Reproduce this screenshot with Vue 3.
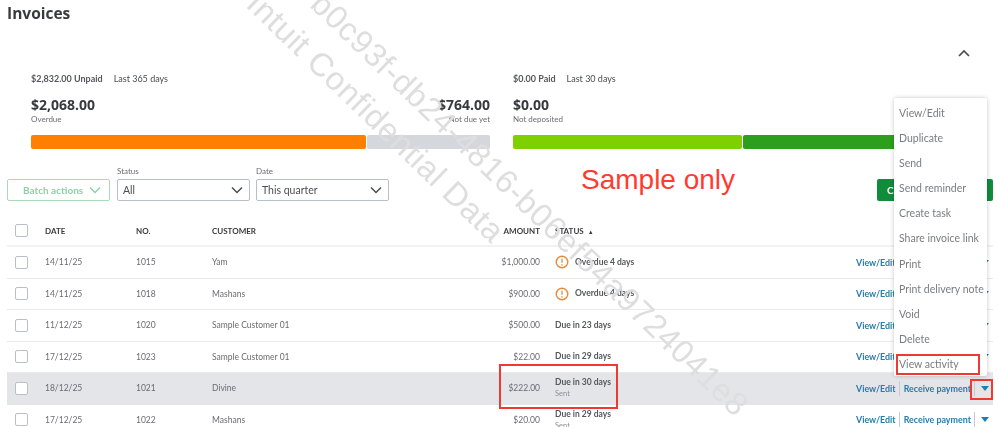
<script setup>
const rows = [
  { date: '14/11/25', no: '1015', customer: 'Yam', amount: '$1,000.00', status: 'Overdue 4 days', overdue: true },
  { date: '14/11/25', no: '1018', customer: 'Mashans', amount: '$900.00', status: 'Overdue 4 days', overdue: true },
  { date: '11/12/25', no: '1020', customer: 'Sample Customer 01', amount: '$500.00', status: 'Due in 23 days' },
  { date: '17/12/25', no: '1023', customer: 'Sample Customer 01', amount: '$22.00', status: 'Due in 29 days' },
  { date: '18/12/25', no: '1021', customer: 'Divine', amount: '$222.00', status: 'Due in 30 days', sub: 'Sent', active: true },
  { date: '17/12/25', no: '1022', customer: 'Mashans', amount: '$20.00', status: 'Due in 29 days', sub: 'Sent' }
]
const menu = ['View/Edit', 'Duplicate', 'Send', 'Send reminder', 'Create task', 'Share invoice link', 'Print', 'Print delivery note', 'Void', 'Delete', 'View activity']
</script>

<template>
  <div class="root">
    <div class="shot">
      <h1 class="title">Invoices</h1>
      <div class="collapse">
        <svg width="14" height="9" viewBox="0 0 14 9"><path d="M2 7l5-5 5 5" fill="none" stroke="#4a4d52" stroke-width="1.7" /></svg>
      </div>

      <section class="money">
        <div class="panel">
          <p class="cap"><b>$2,832.00 Unpaid</b><span>Last 365 days</span></p>
          <div class="figures">
            <div><strong>$2,068.00</strong><small>Overdue</small></div>
            <div class="end"><strong>$764.00</strong><small>Not due yet</small></div>
          </div>
          <div class="bar">
            <i class="orange"></i>
            <i class="grey"></i>
          </div>
        </div>
        <div class="panel">
          <p class="cap"><b>$0.00 Paid</b><span>Last 30 days</span></p>
          <div class="figures">
            <div><strong>$0.00</strong><small>Not deposited</small></div>
          </div>
          <div class="bar">
            <i class="lime"></i>
            <i class="forest"></i>
          </div>
        </div>
      </section>

      <section class="filters">
        <button class="batch">Batch actions
          <svg width="12" height="8" viewBox="0 0 12 8"><path d="M1 1.5l5 5 5-5" fill="none" stroke="#8fd0a5" stroke-width="1.5" /></svg>
        </button>
        <label class="field">
          <span>Status</span>
          <div class="select">All
            <svg width="12" height="8" viewBox="0 0 12 8"><path d="M1 1.5l5 5 5-5" fill="none" stroke="#4a4d52" stroke-width="1.5" /></svg>
          </div>
        </label>
        <label class="field">
          <span>Date</span>
          <div class="select">This quarter
            <svg width="12" height="8" viewBox="0 0 12 8"><path d="M1 1.5l5 5 5-5" fill="none" stroke="#4a4d52" stroke-width="1.5" /></svg>
          </div>
        </label>
        <button class="create">Create invoice</button>
      </section>

      <section class="table">
        <div class="row head">
          <span class="box"></span>
          <span>DATE</span>
          <span>NO.</span>
          <span>CUSTOMER</span>
          <span class="amt">AMOUNT</span>
          <span class="sort">STATUS <em>▲</em></span>
          <span></span>
        </div>
        <div v-for="r in rows" :key="r.no" class="row" :class="{ active: r.active }">
          <span class="box"></span>
          <span>{{ r.date }}</span>
          <span>{{ r.no }}</span>
          <span>{{ r.customer }}</span>
          <span class="amt">{{ r.amount }}</span>
          <div class="status" :class="{ warn: r.overdue }">
            <svg v-if="r.overdue" width="14" height="14" viewBox="0 0 14 14">
              <circle cx="7" cy="7" r="5.8" fill="none" stroke="#e88a3c" stroke-width="1.4" />
              <path d="M7 3.8v4M7 9.2v1.2" stroke="#e88a3c" stroke-width="1.3" />
            </svg>
            <div class="stack">
              <b>{{ r.status }}</b>
              <small v-if="r.sub">{{ r.sub }}</small>
            </div>
          </div>
          <div class="acts">
            <a>View/Edit</a>
            <i></i>
            <a>Receive payment</a>
            <i></i>
            <svg width="8" height="5" viewBox="0 0 8 5"><path d="M0 0h8L4 5z" fill="#1b7fb5" /></svg>
          </div>
        </div>
      </section>

      <div class="watermark one">Intuit Confidential Data</div>
      <div class="watermark two">b0c93f-db24-4816-b06ef54a9724041e8</div>

      <ul class="menu">
        <li v-for="m in menu" :key="m">{{ m }}</li>
      </ul>
    </div>

    <div class="sample">Sample only</div>
    <div class="mark m-amount"></div>
    <div class="mark m-activity"></div>
    <div class="mark m-caret"></div>
  </div>
</template>

<style scoped>
.root {
  position: relative;
  height: 427px;
  overflow: hidden;
  background: #fff;
  font-family: Lato, "Open Sans", sans-serif;
  color: #4a4d52;
}
.shot {
  position: relative;
  height: 427px;
  padding: 0 6px 0 7px;
  box-sizing: border-box;
  filter: blur(0.6px);
}
.title {
  margin: 0;
  padding-top: 3px;
  font: 700 15.5px/20px "Open Sans", sans-serif;
  color: #393a3d;
}
.collapse {
  display: flex;
  justify-content: flex-end;
  padding: 26px 22px 0 0;
  height: 24px;
}
.collapse svg { display: block; }
.money {
  display: grid;
  grid-template-columns: 459px 472px;
  column-gap: 23px;
  padding-left: 24px;
  margin-top: 0;
}
.cap {
  margin: 0;
  font-size: 9px;
  line-height: 12px;
  display: flex;
  gap: 11px;
}
.cap b { font-weight: 700; color: #55585c; }
.figures {
  display: flex;
  justify-content: space-between;
  margin-top: 10px;
  height: 40px;
}
.figures strong {
  display: block;
  font: 700 14px/19px "Open Sans", sans-serif;
  color: #393a3d;
}
.figures small {
  display: block;
  font-size: 8px;
  line-height: 10px;
  color: #6b6c72;
}
.figures .end { text-align: right; }
.bar {
  display: flex;
  gap: 1px;
  height: 14px;
}
.bar i { display: block; border-radius: 2px; }
.orange { width: 335px; background: #ff8000; }
.grey { flex: 1; background: #d4d7dc; }
.lime { width: 229px; background: #7fd000; }
.forest { flex: 1; background: #2ca01c; }
.filters {
  display: flex;
  align-items: flex-end;
  margin-top: 15px;
  height: 37px;
}
.batch {
  width: 103px;
  height: 22px;
  box-sizing: border-box;
  border: 1px solid #a8dcb8;
  border-radius: 2px;
  background: #fff;
  color: #8fd0a5;
  font: 700 10px Lato, sans-serif;
  padding: 0 0 0 15px;
  display: flex;
  align-items: center;
  gap: 6px;
  margin-right: 7px;
}
.field { display: flex; flex-direction: column; width: 133px; margin-right: 6px; }
.field span { font-size: 8px; line-height: 14px; color: #6b6c72; height: 15px; }
.select {
  height: 22px;
  box-sizing: border-box;
  border: 1px solid #babec5;
  border-radius: 2px;
  font-size: 10.5px;
  padding: 0 6px 0 5px;
  display: flex;
  align-items: center;
  justify-content: space-between;
}
.create {
  margin-left: auto;
  width: 116px;
  height: 22px;
  border: 0;
  border-radius: 2px;
  background: #108c3b;
  color: #fff;
  font: 700 10px Lato, sans-serif;
  text-align: left;
  padding-left: 10px;
}
.table { margin-top: 15px; }
.row {
  display: grid;
  grid-template-columns: 38px 91px 76px 228px 100px 316px 1fr;
  align-items: center;
  height: 31.5px;
  box-sizing: border-box;
  border-bottom: 1px solid #e9eaec;
  font-size: 8.5px;
  color: #6b6c72;
}
.row.head {
  height: 31px;
  font-size: 8px;
  font-weight: 700;
  color: #393a3d;
  border-bottom-width: 2px;
  border-bottom-color: #f1f2f3;
}
.row.active { background: #e3e5e8; border-bottom-color: #e3e5e8; }
.box {
  display: block;
  width: 13px;
  height: 13px;
  margin-left: 8px;
  box-sizing: border-box;
  border: 1px solid #babec5;
  border-radius: 2px;
  background: #fff;
}
.amt { text-align: right; }
.sort { padding-left: 15px; }
.sort em { font-style: normal; font-size: 6px; margin-left: 2px; }
.status {
  padding-left: 15px;
  display: flex;
  align-items: center;
  gap: 6px;
  color: #393a3d;
}
.stack { display: flex; flex-direction: column; }
.stack b { font-weight: 700; line-height: 11px; color: #55585c; }
.stack small { font-size: 7.5px; line-height: 11px; color: #8d9096; }
.acts {
  display: flex;
  align-items: center;
  color: #2a7ba8;
  font-weight: 700;
  font-size: 8.9px;
  white-space: nowrap;
}
.acts i { width: 1px; height: 15px; background: #c8cbd0; margin: 0 4px 0 3px; }
.acts svg { margin-left: 2px; }
.watermark {
  position: absolute;
  font: 32.5px "Liberation Sans", sans-serif;
  color: #dedede;
  white-space: nowrap;
  transform-origin: 0 50%;
  transform: rotate(44deg);
  letter-spacing: 0.6px;
}
.one { left: 252px; top: -20px; }
.two { left: 316px; top: -20px; }
.menu {
  position: absolute;
  left: 894px;
  top: 98px;
  width: 93px;
  height: 278px;
  box-sizing: border-box;
  margin: 0;
  padding: 3px 0 0 5px;
  list-style: none;
  background: #fff;
  border-radius: 2px;
  box-shadow: 0 0 4px rgba(0, 0, 0, 0.22);
  font-size: 10.5px;
  color: #7a7c80;
}
.menu li { height: 25.1px; line-height: 25.1px; white-space: nowrap; }
.sample {
  position: absolute;
  left: 581px;
  top: 163px;
  font: 28px/34px "Liberation Sans", sans-serif;
  color: #ff3b30;
}
.mark {
  position: absolute;
  box-sizing: border-box;
  border: 2px solid #ee3a32;
}
.m-amount { left: 499px; top: 364px; width: 119px; height: 45px; }
.m-activity { left: 896px; top: 354px; width: 84px; height: 21px; }
.m-caret { left: 970px; top: 379px; width: 23px; height: 21px; }
</style>
